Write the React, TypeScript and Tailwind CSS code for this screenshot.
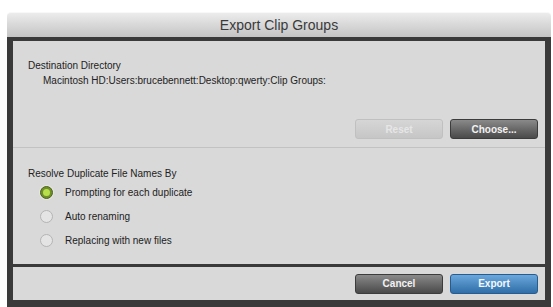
const font = "font-['Liberation_Sans','Arial',sans-serif]";

function Radio({ checked, label }: { checked?: boolean; label: string }) {
  return (
    <div className="flex items-center h-[24px]">
      {checked ? (
        <span className="w-[13px] h-[13px] rounded-full bg-[#6f8f2a] border border-[#4d6418] flex items-center justify-center shadow-[0_0_0_1px_#e6e6e6]">
          <span className="w-[7px] h-[7px] rounded-full bg-[#b8e04a]" />
        </span>
      ) : (
        <span className="w-[13px] h-[13px] rounded-full bg-[#e4e4e4] border border-[#b4b4b4]" />
      )}
      <span className="ml-[12px] text-[10px] text-[#222]">{label}</span>
    </div>
  );
}

function Button({ label, kind }: { label: string; kind: "dark" | "blue" | "disabled" }) {
  const styles = {
    dark: "bg-gradient-to-b from-[#8a8a8a] to-[#4a4a4a] border-[#3c3c3c] text-[#f2f2f2]",
    blue: "bg-gradient-to-b from-[#6aa7dc] to-[#2f6ea8] border-[#285c8e] text-[#f4f8fc]",
    disabled: "bg-gradient-to-b from-[#d6d6d6] to-[#c6c6c6] border-[#c0c0c0] text-[#e6e6e6]",
  }[kind];
  return (
    <div
      className={`w-[88px] h-[20px] rounded-[3px] border flex items-center justify-center text-[10px] font-bold ${styles}`}
    >
      {label}
    </div>
  );
}

export default function App() {
  return (
    <div className={`w-[553px] h-[307px] bg-white pt-[12px] pl-[7px] pr-[2px] overflow-hidden ${font}`}>
      <div className="w-[544px] flex flex-col">
        {/* Title bar */}
        <div className="h-[25px] rounded-t-[4px] bg-gradient-to-b from-[#ececec] to-[#c4c4c4] border-t border-[#f8f8f8] flex items-center justify-center">
          <span className="text-[14px] text-[#3a3a3a]">Export Clip Groups</span>
        </div>

        {/* Dark frame */}
        <div className="bg-[#3a3a3a] px-[6px] pt-[4px] pb-[7px] flex flex-col gap-[3px]">
          {/* Main panel */}
          <div className="bg-[#d9d9d9] h-[223px] flex flex-col">
            <div className="h-[107px] flex flex-col pl-[15px] pr-[7px] pt-[19px] border-b border-[#c2c2c2]">
              <div className="text-[10px] text-[#222] leading-[12px]">Destination Directory</div>
              <div className="text-[10px] text-[#222] leading-[12px] mt-[3px] pl-[15px]">
                Macintosh HD:Users:brucebennett:Desktop:qwerty:Clip Groups:
              </div>
              <div className="flex justify-end gap-[7px] mt-[32px]">
                <Button label="Reset" kind="disabled" />
                <Button label="Choose..." kind="dark" />
              </div>
            </div>
            <div className="flex flex-col pl-[15px] pt-[20px]">
              <div className="text-[10px] text-[#222] leading-[12px]">Resolve Duplicate File Names By</div>
              <div className="pl-[12px] flex flex-col">
                <Radio checked label="Prompting for each duplicate" />
                <Radio label="Auto renaming" />
                <Radio label="Replacing with new files" />
              </div>
            </div>
          </div>

          {/* Bottom panel */}
          <div className="bg-[#d9d9d9] h-[33px] flex items-center justify-end gap-[7px] pr-[7px]">
            <Button label="Cancel" kind="dark" />
            <Button label="Export" kind="blue" />
          </div>
        </div>
      </div>
    </div>
  );
}
